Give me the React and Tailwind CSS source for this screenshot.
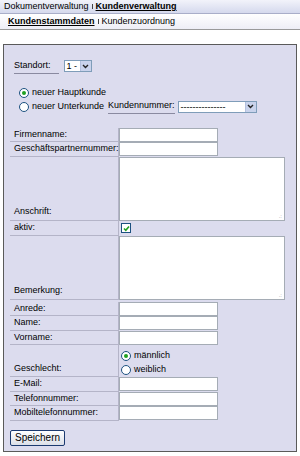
import React from 'react';

const Sep = () => (
  <span className="inline-block w-px h-[5px] bg-[#444] mx-[3px] align-baseline" />
);

const Radio = ({ checked }) => (
  <span className="inline-flex items-center justify-center w-[10px] h-[10px] rounded-full border border-[#1c5180] bg-white shrink-0">
    {checked && <span className="w-[4px] h-[4px] rounded-full bg-[#21a121]" />}
  </span>
);

const Check = () => (
  <span className="inline-flex items-center justify-center w-[10px] h-[10px] border border-[#1c5180] bg-white">
    <svg width="7" height="7" viewBox="0 0 7 7">
      <path d="M1 3.5 L2.8 5.3 L6 1.5" stroke="#21a121" strokeWidth="1.6" fill="none" />
    </svg>
  </span>
);

const Select = ({ text, width }) => (
  <span className={`inline-flex items-stretch h-[12px] border border-[#7f9db9] bg-white ${width}`}>
    <span className="flex-1 pl-[2px] leading-[10px] overflow-hidden whitespace-nowrap">{text}</span>
    <span className="w-[11px] flex items-center justify-center bg-[#c9d3ec] border-l border-[#b3c0de]">
      <svg width="7" height="5" viewBox="0 0 7 5">
        <path d="M1 1 L3.5 3.5 L6 1" stroke="#222" strokeWidth="1.4" fill="none" />
      </svg>
    </span>
  </span>
);

const Input = () => <span className="block w-[99px] h-[14px] border border-[#a5acb5] bg-white" />;

const Area = () => (
  <span className="relative block w-[166px] h-[64px] border border-[#a5acb5] bg-white">
    <span className="absolute right-[2px] bottom-[1px] text-[6px] leading-[6px] text-[#999]">.:</span>
  </span>
);

const Row = ({ label, children, tall }) => (
  <div className="flex">
    <div className={`w-[109px] border-b border-r border-[#b4b4c8] pl-[4px] flex ${tall ? 'items-end pb-[1px]' : 'items-center'}`}>
      {label}
    </div>
    <div>{children}</div>
  </div>
);

export default function App() {
  return (
    <div className="w-[300px] h-[456px] bg-white text-[9px] text-black overflow-hidden" style={{ fontFamily: '"Liberation Sans", Arial, sans-serif' }}>
      <div className="h-[14px] pl-[4px] flex items-center bg-gradient-to-b from-[#f2f3fa] to-[#d5d9ed] border-b border-[#a9aec9]">
        <span>Dokumentverwaltung</span>
        <Sep />
        <span className="font-bold underline">Kundenverwaltung</span>
      </div>
      <div className="h-[16px] pl-[8px] flex items-center bg-gradient-to-b from-white to-[#eeeef6] border-b border-[#9a9a9a]">
        <span className="font-bold underline">Kundenstammdaten</span>
        <Sep />
        <span>Kundenzuordnung</span>
      </div>

      <div className="mx-[3px] mt-[14px] h-[408px] border border-[#5a5a5a] bg-[#dcdcee] pl-[6px] pt-[14px]">
        <div className="flex items-center gap-[5px] pl-[4px]">
          <span className="border-b border-[#8a8aa0] pr-[8px]">Standort:</span>
          <Select text="1 -" width="w-[28px]" />
        </div>

        <div className="mt-[12px] pl-[9px] flex items-center gap-[3px] h-[14px]">
          <Radio checked />
          <span>neuer Hauptkunde</span>
        </div>
        <div className="pl-[9px] flex items-center gap-[3px] h-[14px]">
          <Radio />
          <span>neuer Unterkunde</span>
          <span className="ml-[1px] border-b border-[#8a8aa0]">Kundennummer:</span>
          <Select text="---------------" width="w-[79px]" />
        </div>

        <div className="mt-[14px]">
          <Row label="Firmenname:"><Input /></Row>
          <Row label="Geschäftspartnernummer:"><Input /></Row>
          <Row label="Anschrift:" tall><Area /></Row>
          <Row label="aktiv:">
            <div className="h-[15px] flex items-center pl-[2px]"><Check /></div>
          </Row>
          <Row label="Bemerkung:" tall><Area /></Row>
          <div className="h-[2px]" />
          <Row label="Anrede:"><Input /></Row>
          <Row label="Name:"><Input /></Row>
          <Row label="Vorname:"><Input /></Row>
          <Row label="Geschlecht:" tall>
            <div className="pt-[4px] pl-[2px]">
              <div className="flex items-center gap-[3px] h-[14px]"><Radio checked /><span>männlich</span></div>
              <div className="flex items-center gap-[3px] h-[14px]"><Radio /><span>weiblich</span></div>
            </div>
          </Row>
          <Row label="E-Mail:"><Input /></Row>
          <Row label="Telefonnummer:"><Input /></Row>
          <Row label="Mobiltelefonnummer:"><Input /></Row>
        </div>

        <button className="mt-[9px] h-[16px] px-[4px] border border-[#1c3a70] rounded-[2px] bg-gradient-to-b from-white to-[#dcdfe8] text-[10px] leading-none">
          Speichern
        </button>
      </div>
    </div>
  );
}
